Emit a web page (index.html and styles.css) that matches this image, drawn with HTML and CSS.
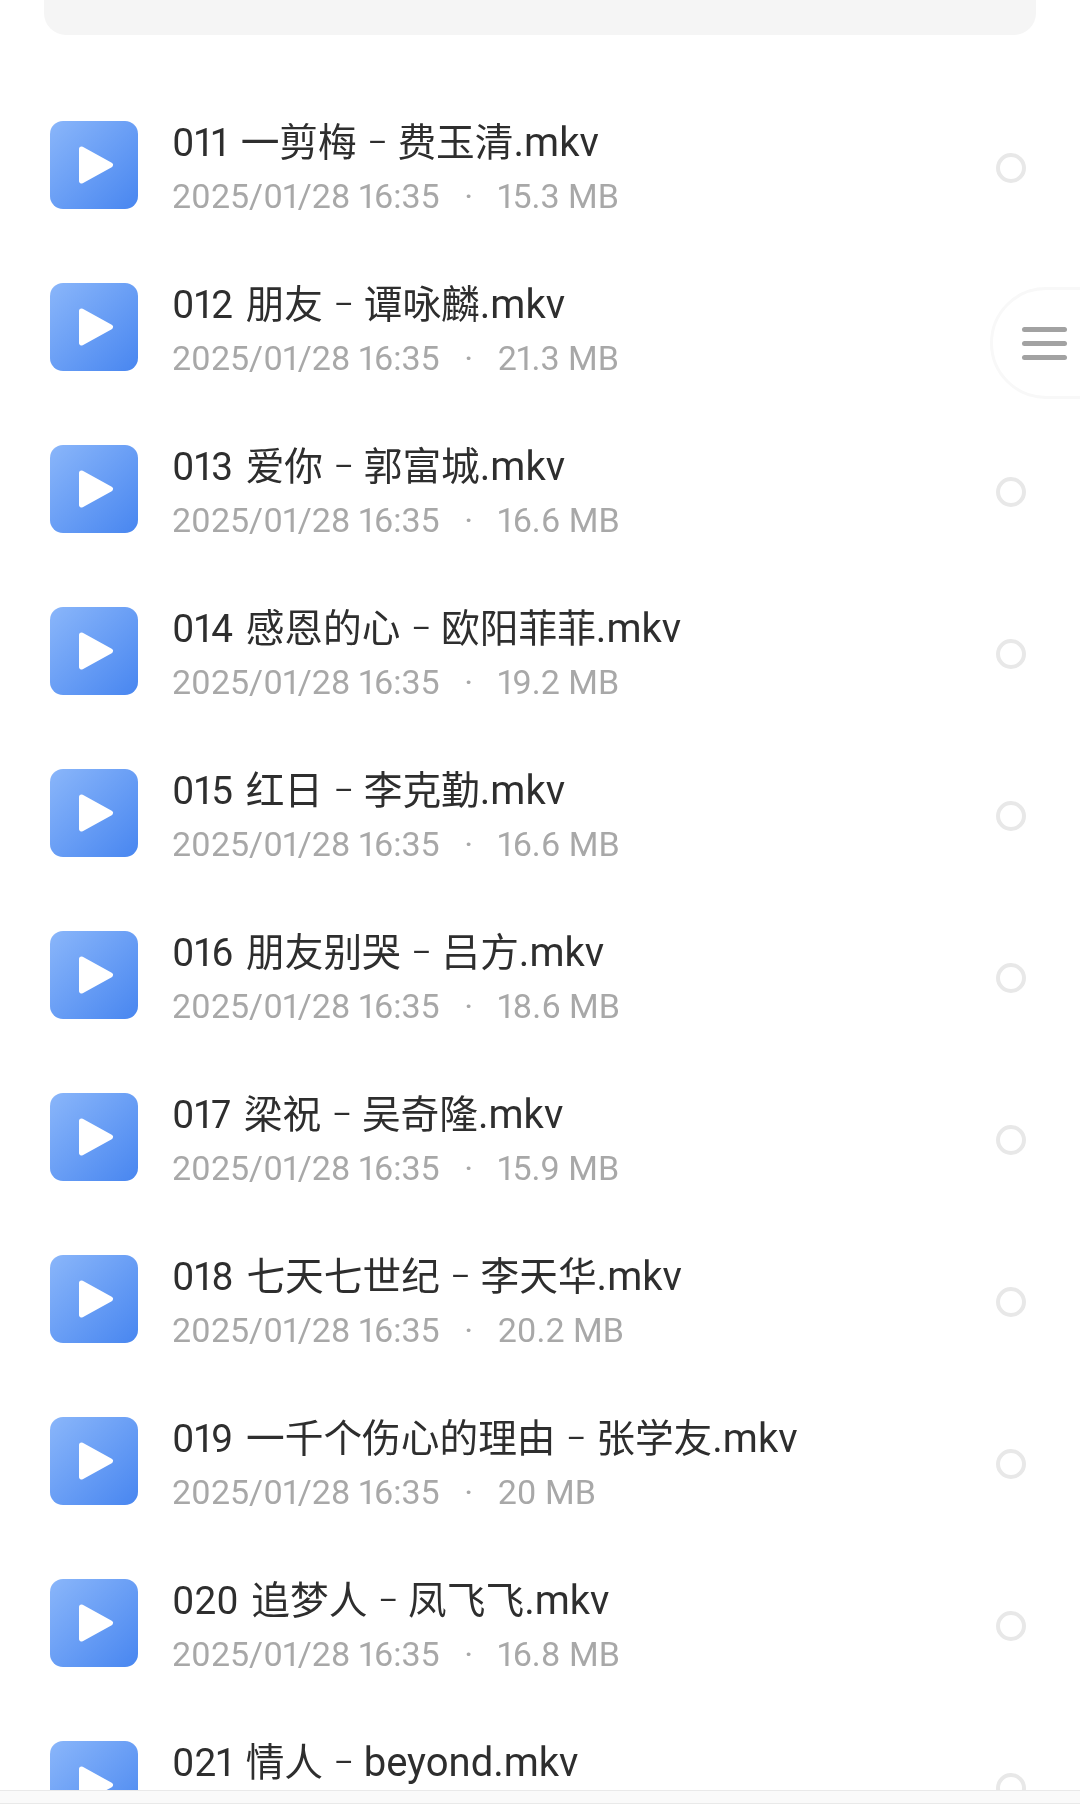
FILE: index.html
```html
<!DOCTYPE html>
<html lang="zh-CN">
<head>
<meta charset="utf-8">
<title>文件列表</title>
<link rel="stylesheet" href="styles.css">
</head>
<body>
<svg class="defs" width="0" height="0" aria-hidden="true">
  <defs>
    <linearGradient id="tile" x1="0" y1="0" x2="1" y2="1">
      <stop offset="0" stop-color="#8ab6fa"/>
      <stop offset="1" stop-color="#4886f0"/>
    </linearGradient>
    <symbol id="video" viewBox="0 0 88 88">
      <rect width="88" height="88" rx="13" fill="url(#tile)"/>
      <path d="M31.5 28L60.5 44L31.5 60Z" fill="#fff" stroke="#fff" stroke-width="5" stroke-linejoin="round"/>
    </symbol>
  </defs>
</svg>
<main class="screen">
  <div class="top-card"></div>
  <ul class="files">
    <li class="file"><svg class="thumb"><use href="#video"/></svg><div class="info"><div class="name">011 一剪梅<span class="sep">–</span>费玉清<span class="ext">.mkv</span></div><div class="meta"><span>2025/01/28 16:35</span><span class="dot">·</span><span>15.3 MB</span></div></div><span class="radio"></span></li>
    <li class="file"><svg class="thumb"><use href="#video"/></svg><div class="info"><div class="name">012 朋友<span class="sep">–</span>谭咏麟<span class="ext">.mkv</span></div><div class="meta"><span>2025/01/28 16:35</span><span class="dot">·</span><span>21.3 MB</span></div></div><span class="radio"></span></li>
    <li class="file"><svg class="thumb"><use href="#video"/></svg><div class="info"><div class="name">013 爱你<span class="sep">–</span>郭富城<span class="ext">.mkv</span></div><div class="meta"><span>2025/01/28 16:35</span><span class="dot">·</span><span>16.6 MB</span></div></div><span class="radio"></span></li>
    <li class="file"><svg class="thumb"><use href="#video"/></svg><div class="info"><div class="name">014 感恩的心<span class="sep">–</span>欧阳菲菲<span class="ext">.mkv</span></div><div class="meta"><span>2025/01/28 16:35</span><span class="dot">·</span><span>19.2 MB</span></div></div><span class="radio"></span></li>
    <li class="file"><svg class="thumb"><use href="#video"/></svg><div class="info"><div class="name">015 红日<span class="sep">–</span>李克勤<span class="ext">.mkv</span></div><div class="meta"><span>2025/01/28 16:35</span><span class="dot">·</span><span>16.6 MB</span></div></div><span class="radio"></span></li>
    <li class="file"><svg class="thumb"><use href="#video"/></svg><div class="info"><div class="name">016 朋友别哭<span class="sep">–</span>吕方<span class="ext">.mkv</span></div><div class="meta"><span>2025/01/28 16:35</span><span class="dot">·</span><span>18.6 MB</span></div></div><span class="radio"></span></li>
    <li class="file"><svg class="thumb"><use href="#video"/></svg><div class="info"><div class="name">017 梁祝<span class="sep">–</span>吴奇隆<span class="ext">.mkv</span></div><div class="meta"><span>2025/01/28 16:35</span><span class="dot">·</span><span>15.9 MB</span></div></div><span class="radio"></span></li>
    <li class="file"><svg class="thumb"><use href="#video"/></svg><div class="info"><div class="name">018 七天七世纪<span class="sep">–</span>李天华<span class="ext">.mkv</span></div><div class="meta"><span>2025/01/28 16:35</span><span class="dot">·</span><span>20.2 MB</span></div></div><span class="radio"></span></li>
    <li class="file"><svg class="thumb"><use href="#video"/></svg><div class="info"><div class="name">019 一千个伤心的理由<span class="sep">–</span>张学友<span class="ext">.mkv</span></div><div class="meta"><span>2025/01/28 16:35</span><span class="dot">·</span><span>20 MB</span></div></div><span class="radio"></span></li>
    <li class="file"><svg class="thumb"><use href="#video"/></svg><div class="info"><div class="name">020 追梦人<span class="sep">–</span>凤飞飞<span class="ext">.mkv</span></div><div class="meta"><span>2025/01/28 16:35</span><span class="dot">·</span><span>16.8 MB</span></div></div><span class="radio"></span></li>
    <li class="file"><svg class="thumb"><use href="#video"/></svg><div class="info"><div class="name">021 情人<span class="sep">–</span><span class="ext">beyond.mkv</span></div></div><span class="radio"></span></li>
  </ul>
  <div class="handle">
    <span class="bar"></span><span class="bar"></span><span class="bar"></span>
  </div>
</main>
<footer class="bottom"></footer>
</body>
</html>
```
FILE: styles.css
```css
* { box-sizing: border-box; }
html, body { margin: 0; height: 1804px; overflow: hidden; background: #fff; }
body { display: flex; flex-direction: column; font-family: Roboto, "Noto Sans CJK SC", sans-serif; font-variant-numeric: proportional-nums; }
.defs { position: absolute; }
.screen { position: relative; height: 1790px; overflow: hidden; filter: blur(0.5px); }
.top-card { height: 35px; margin: 0 44px; background: #f5f5f5; border-radius: 0 0 22px 22px; }
.files { list-style: none; margin: 0; padding: 86px 0 0 50px; }
.file { display: flex; align-items: flex-start; height: 162px; }
.thumb { flex: none; width: 88px; height: 88px; }
.info { flex: 1; margin: -4px 0 0 34px; }
.name { font-size: 38.7px; line-height: 52px; word-spacing: 3px; color: #2e2e2e; white-space: nowrap; }
.sep { display: inline-block; margin: 0 10px 0 11px; font-size: 30px; vertical-align: 4px; line-height: 1; }
.ext { font-size: 40px; }
.meta { display: flex; margin-top: 4px; font-size: 34px; line-height: 46px; color: #a8a8a8; white-space: nowrap; }
.dot { width: 58px; text-align: center; }
.radio { flex: none; width: 30px; height: 30px; margin: 32px 54px 0 0; border: 4px solid #e8e8e8; border-radius: 50%; }
.handle { position: absolute; top: 287px; right: -60px; width: 150px; height: 112px; display: flex; flex-direction: column; gap: 9px; justify-content: center; padding-left: 29px; background: #fff; border: 3px solid #f8f8f8; border-radius: 56px; }
.bar { width: 45px; height: 5px; background: #a2a2a2; border-radius: 3px; }
.bottom { height: 14px; background: #fafafa; border-top: 1px solid #e9e9e9; border-bottom: 1px solid #e9e9e9; }
```
